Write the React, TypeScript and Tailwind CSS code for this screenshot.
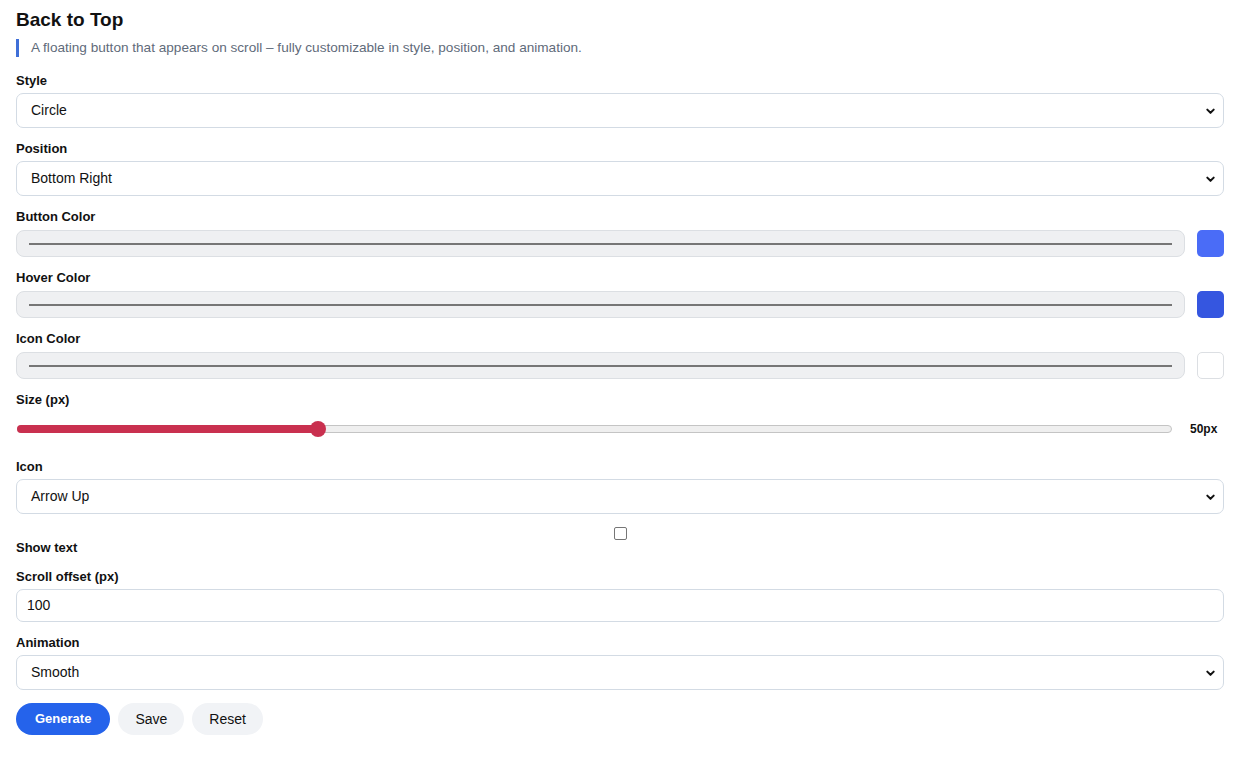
import React from "react";

const Chevron = () => (
  <svg
    className="pointer-events-none absolute right-[7px] top-1/2 -translate-y-1/2"
    width="11"
    height="11"
    viewBox="0 0 12 12"
    fill="none"
  >
    <path d="M2.5 4.5 L6 8 L9.5 4.5" stroke="#111" strokeWidth="2.2" strokeLinecap="round" strokeLinejoin="round" />
  </svg>
);

const Label = ({ children, className = "" }: { children: React.ReactNode; className?: string }) => (
  <div className={`text-[13px] leading-[16px] font-bold text-[#111] ${className}`}>{children}</div>
);

const SelectField = ({ label, value }: { label: string; value: string }) => (
  <div className="mt-[13px]">
    <Label className="mb-[4px]">{label}</Label>
    <div className="relative h-[35px] rounded-[7px] border border-[#d3dbe4] bg-white flex items-center pl-[14px] text-[14px] text-[#111]">
      {value}
      <Chevron />
    </div>
  </div>
);

const ColorField = ({ label, swatch, white }: { label: string; swatch: string; white?: boolean }) => (
  <div className="mt-[13px]">
    <Label className="mb-[5px]">{label}</Label>
    <div className="flex items-center gap-[12px]">
      <div className="flex-1 h-[27px] rounded-[8px] border border-[#dcdfe3] bg-[#eff0f2] flex items-center px-[12px]">
        <div className="h-[2px] w-full bg-[#767676]" />
      </div>
      <div
        className={`w-[27px] h-[27px] rounded-[5px] ${white ? "border border-[#dcdfe3]" : ""}`}
        style={{ backgroundColor: swatch }}
      />
    </div>
  </div>
);

export default function App() {
  const pct = 26;
  return (
    <div className="min-h-screen bg-white pl-[16px] pr-[14px] pt-[8px] pb-[40px] font-['Liberation_Sans',Arial,sans-serif] text-[#111]">
      <h2 className="text-[19px] leading-[24px] font-bold">Back to Top</h2>
      <p className="mt-[7px] border-l-[3px] border-[#3f6fd8] pl-[12px] text-[13.6px] leading-[18px] text-[#5f6b7a]">
        A floating button that appears on scroll – fully customizable in style, position, and animation.
      </p>

      <div className="h-[3px]" />
      <SelectField label="Style" value="Circle" />
      <SelectField label="Position" value="Bottom Right" />
      <ColorField label="Button Color" swatch="#4a6cf7" />
      <ColorField label="Hover Color" swatch="#3556e0" />
      <ColorField label="Icon Color" swatch="#ffffff" white />

      <div className="mt-[13px]">
        <Label>Size (px)</Label>
        <div className="pt-[4px] h-[38px] flex items-center gap-[18px]">
          <div className="relative flex-1 h-[8px] ml-[1px] rounded-full border border-[#c4c4c4] bg-[#efefef]">
            <div className="absolute left-[-1px] top-[-1px] h-[8px] rounded-full bg-[#c9304f]" style={{ width: `${pct}%` }} />
            <div
              className="absolute top-1/2 w-[16px] h-[16px] -translate-x-1/2 -translate-y-1/2 rounded-full bg-[#c9304f]"
              style={{ left: `${pct}%` }}
            />
          </div>
          <div className="w-[34px] text-[12px] font-bold">50px</div>
        </div>
      </div>

      <SelectField label="Icon" value="Arrow Up" />

      <div className="mt-[13px] flex justify-center">
        <div className="w-[13px] h-[13px] rounded-[2px] border border-[#767676] bg-white" />
      </div>
      <Label>Show text</Label>

      <div className="mt-[13px]">
        <Label className="mb-[4px]">Scroll offset (px)</Label>
        <div className="h-[33px] rounded-[7px] border border-[#d3dbe4] bg-white flex items-center pl-[10px] text-[14px]">
          100
        </div>
      </div>

      <SelectField label="Animation" value="Smooth" />

      <div className="mt-[13px] flex gap-[8px]">
        <button className="h-[32px] px-[19px] rounded-full bg-[#2563eb] text-white text-[13px] font-bold">Generate</button>
        <button className="h-[32px] px-[17px] rounded-full bg-[#f1f3f6] text-[14px] text-[#111]">Save</button>
        <button className="h-[32px] px-[17px] rounded-full bg-[#f1f3f6] text-[14px] text-[#111]">Reset</button>
      </div>
    </div>
  );
}
